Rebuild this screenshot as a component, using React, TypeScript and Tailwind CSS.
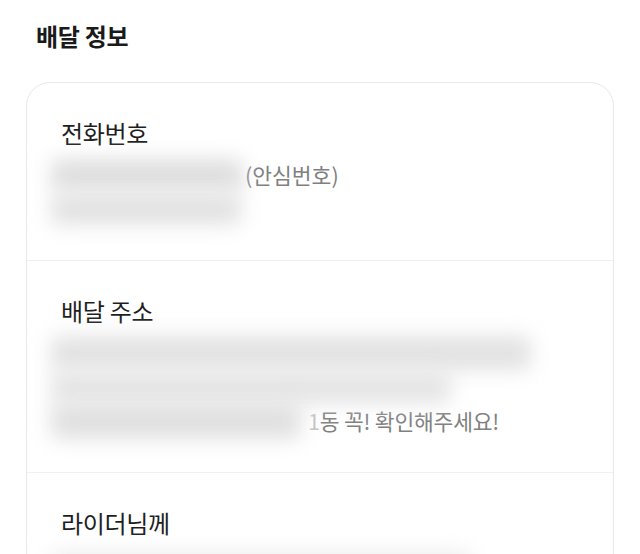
import React from "react";

const font = { fontFamily: '"Noto Sans CJK KR", "Noto Sans", sans-serif' };

function Blur({ w, h = 24, tone = "bg-[#dedede]" }: { w: number; h?: number; tone?: string }) {
  return (
    <span
      className={`inline-block shrink-0 -ml-[10px] rounded-lg blur-[10px] ${tone}`}
      style={{ width: w, height: h }}
    />
  );
}

export default function App() {
  return (
    <div className="w-[640px] h-[554px] overflow-hidden bg-white" style={font}>
      <div className="pt-[21px] px-[36px]">
        <h2 className="text-[24px] leading-[30px] font-bold text-[#1a1a1a] tracking-[-0.3px]">배달 정보</h2>
      </div>
      <div className="mt-[31px] mx-[26px] rounded-[24px] border border-[#e9e9e9] bg-white">
        <section className="px-[34px] pt-[35px] pb-[34px] border-b border-[#f0f0f0]">
          <h3 className="text-[24px] leading-[30px] text-[#1e1e1e] tracking-[-0.3px]">전화번호</h3>
          <div className="mt-[10px] text-[21.5px] leading-[34px] text-[#808080]">
            <div className="flex h-[34px] items-center">
              <Blur w={192} h={32} />
              <span className="ml-[2px]">(안심번호)</span>
            </div>
            <div className="flex h-[34px] items-center">
              <Blur w={190} h={32} tone="bg-[#e2e2e2]" />
            </div>
          </div>
        </section>
        <section className="px-[34px] pt-[35px] pb-[34px] border-b border-[#f0f0f0]">
          <h3 className="text-[24px] leading-[30px] text-[#1e1e1e] tracking-[-0.3px]">배달 주소</h3>
          <div className="mt-[10px] text-[21.5px] leading-[34px] text-[#808080]">
            <div className="flex h-[34px] items-center">
              <Blur w={480} h={34} tone="bg-[#e2e2e2]" />
            </div>
            <div className="flex h-[34px] items-center">
              <Blur w={400} h={34} tone="bg-[#e5e5e5]" />
            </div>
            <div className="flex h-[34px] items-center">
              <Blur w={250} h={36} tone="bg-[#e0e0e0]" />
              <span className="ml-[7px] tracking-[-0.2px]">
                <span className="text-[#c4c4c4]">1</span>동 꼭! 확인해주세요!
              </span>
            </div>
          </div>
        </section>
        <section className="px-[34px] pt-[35px] pb-[34px]">
          <h3 className="text-[24px] leading-[30px] text-[#1e1e1e] tracking-[-0.3px]">라이더님께</h3>
          <div className="mt-[10px] text-[21.5px] leading-[34px] text-[#808080]">
            <div className="flex h-[34px] items-center">
              <Blur w={420} h={26} tone="bg-[#ededed]" />
            </div>
          </div>
        </section>
      </div>
    </div>
  );
}
